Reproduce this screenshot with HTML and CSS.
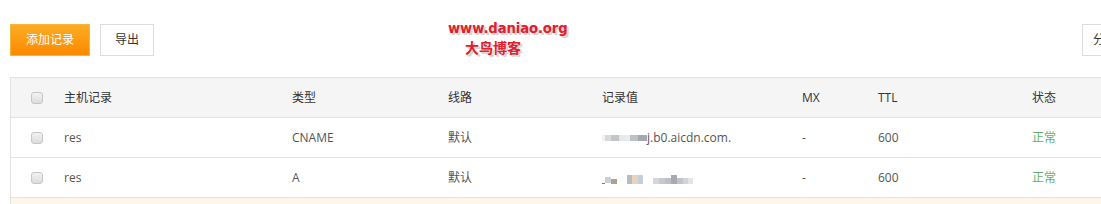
FILE: index.html
```html
<!DOCTYPE html>
<html lang="zh-CN">
<head>
<meta charset="utf-8">
<title>解析记录</title>
<link rel="stylesheet" href="styles.css">
</head>
<body>
<div class="page">
  <div class="toolbar">
    <button class="btn btn-primary">添加记录</button>
    <button class="btn">导出</button>
    <div class="spacer"></div>
    <button class="btn btn-cut">分页</button>
  </div>
  <div class="watermark">
    <div class="wm-url">www.daniao.org</div>
    <div class="wm-name">大鸟博客</div>
  </div>
  <div class="table">
    <div class="row head">
      <div class="cell"><span class="cb"></span></div>
      <div class="cell">主机记录</div>
      <div class="cell">类型</div>
      <div class="cell">线路</div>
      <div class="cell">记录值</div>
      <div class="cell">MX</div>
      <div class="cell">TTL</div>
      <div class="cell">状态</div>
    </div>
    <div class="row">
      <div class="cell"><span class="cb"></span></div>
      <div class="cell">res</div>
      <div class="cell">CNAME</div>
      <div class="cell">默认</div>
      <div class="cell"><span class="mosaic"><i class="m1"></i><i class="m2"></i><i class="m3"></i><i class="m4"></i><i class="m5"></i><i class="m6"></i><i class="m7"></i></span>j.b0.aicdn.com.</div>
      <div class="cell">-</div>
      <div class="cell">600</div>
      <div class="cell ok">正常</div>
    </div>
    <div class="row">
      <div class="cell"><span class="cb"></span></div>
      <div class="cell">res</div>
      <div class="cell">A</div>
      <div class="cell">默认</div>
      <div class="cell"><span class="mosaic m-b"><i class="u"></i><i class="n1"></i><i class="n2"></i><i class="gap"></i><i class="n3"></i><i class="n4"></i><i class="n5"></i><i class="gap"></i><i class="n6"></i><i class="n7"></i><i class="n8"></i><i class="n9"></i><i class="n10"></i><i class="n11"></i><i class="n12"></i></span></div>
      <div class="cell">-</div>
      <div class="cell">600</div>
      <div class="cell ok">正常</div>
    </div>
    <div class="row hl"></div>
  </div>
</div>
</body>
</html>
```
FILE: styles.css
```css
* { box-sizing: border-box; }
html, body { margin: 0; padding: 0; background: #fff; overflow: hidden; }
body {
  font-family: "Open Sans", "Noto Sans CJK SC", sans-serif;
  font-size: 12px;
  color: #333;
}
.page { position: relative; width: 1101px; height: 204px; overflow: hidden; }
.toolbar {
  display: flex;
  align-items: center;
  gap: 10px;
  padding: 24px 0 0 10px;
  height: 56px;
}
.spacer { flex: 1; }
.btn {
  height: 32px;
  padding: 0 14px;
  border: 1px solid #ddd;
  background: #fff;
  color: #333;
  font: inherit;
  font-size: 12px;
  line-height: 30px;
  cursor: pointer;
}
.btn-primary {
  width: 80px;
  padding: 0;
  border-color: #f9b43c;
  color: #fff;
  background: linear-gradient(#fcac24, #fb8a00);
}
.btn-cut {
  width: 40px;
  padding: 0 0 0 10px;
  text-align: left;
  margin-right: -21px;
}
.watermark {
  position: absolute;
  left: 448px;
  top: 20px;
  font-family: "DejaVu Sans", "Noto Sans CJK SC", sans-serif;
  font-weight: bold;
  color: #e0202e;
  text-shadow: 1px 1px 0 #ddd, 2px 2px 1px #ccc;
  line-height: 18px;
}
.wm-url { font-size: 13.2px; letter-spacing: -0.1px; }
.wm-name { font-size: 14px; padding-left: 17px; font-family: "Noto Sans CJK SC", sans-serif; }
.table {
  margin: 21px 0 0 10px;
  border-top: 1px solid #e3e3e3;
  border-left: 1px solid #e3e3e3;
}
.row {
  display: grid;
  grid-template-columns: 53px 228px 156px 154px 200px 76px 154px 1fr;
  align-items: center;
  height: 40px;
  border-bottom: 1px solid #e3e3e3;
  color: #555;
}
.row.head { height: 40px; background: #f5f5f5; color: #333; }
.row.hl { background: #fdf7e8; border-bottom: none; }
.cell { white-space: nowrap; line-height: 20px; }
.cb {
  display: block;
  width: 12px;
  height: 12px;
  margin-left: 20px;
  border: 1px solid #c6c6c6;
  border-radius: 3px;
  background: linear-gradient(#f3f3f3, #dcdcdc);
}
.ok { color: #62b06a; }
.mosaic { display: inline-flex; align-items: center; vertical-align: middle; height: 12px; margin-right: 0; }
.mosaic i { display: block; width: 6px; height: 6px; }
.m1 { background: #f0f2f5; width: 3px !important; }
.m2 { background: #d6d9df; }
.m3 { background: #c3c4ca; width: 8px !important; }
.m4 { background: #e6e8ee; width: 6px !important; }
.m5 { background: #ececef; width: 5px !important; }
.m6 { background: #bcc0c8; width: 8px !important; }
.m7 { background: #a6a8b1; width: 9px !important; }
.m-b { height: 12px; }
.m-b i { height: 6px; margin-top: 3px; }
.m-b .u { width: 3px; height: 1px; background: #777; margin-top: 10px; }
.m-b .n1 { width: 6px; background: #c8d0dc; }
.m-b .n2 { width: 6px; background: #b0a08e; height: 5px; margin-top: 6px; }
.m-b .gap { width: 10px; background: transparent; }
.m-b .n3 { width: 5px; background: #b9bcc3; height: 9px; }
.m-b .n4 { width: 6px; background: #e8d4bc; height: 9px; }
.m-b .n5 { width: 5px; background: #c5cfdd; height: 9px; }
.m-b .n6 { width: 6px; background: #d4d6dc; margin-top: 6px; }
.m-b .n7 { width: 6px; background: #c7c9d0; margin-top: 6px; }
.m-b .n8 { width: 6px; background: #bdbfc6; margin-top: 6px; }
.m-b .n9 { width: 6px; background: #a9aab1; height: 9px; }
.m-b .n10 { width: 6px; background: #c2c4cb; margin-top: 6px; }
.m-b .n11 { width: 5px; background: #d1d3d9; margin-top: 6px; }
.m-b .n12 { width: 5px; background: #e2e4e8; margin-top: 6px; }
```
